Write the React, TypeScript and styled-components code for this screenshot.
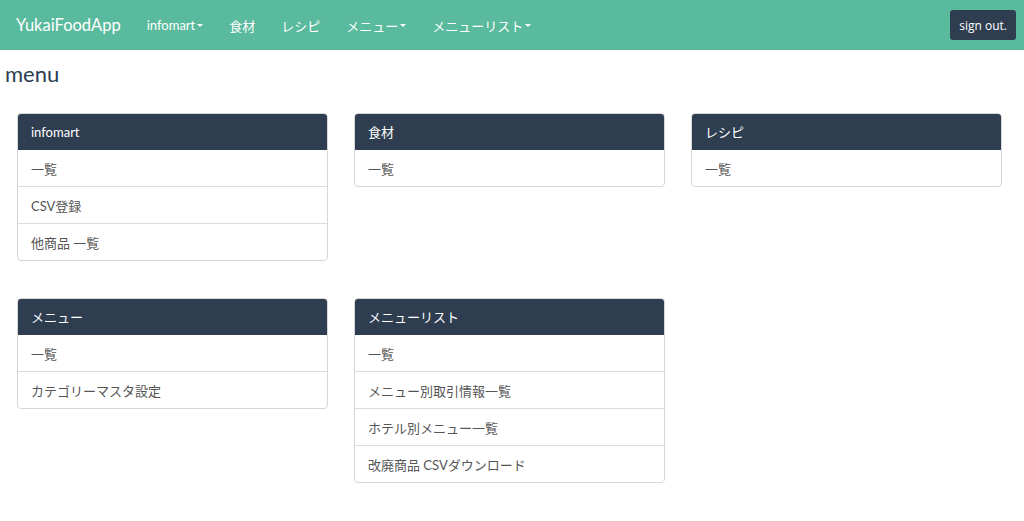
import React from "react";
import styled, { createGlobalStyle } from "styled-components";

const GlobalStyle = createGlobalStyle`
  body {
    margin: 0;
    font-family: Lato, "Noto Sans CJK JP", sans-serif;
    color: #2c3e50;
    background: #fff;
  }
`;

const Navbar = styled.nav`
  height: 50px;
  background: #5aba9e;
  display: flex;
  align-items: center;
  padding: 0 8px 0 16px;
`;

const Brand = styled.a`
  color: #fff;
  font-size: 16.5px;
  margin-right: 13px;
`;

const NavList = styled.ul`
  display: flex;
  list-style: none;
  margin: 0;
  padding: 0;
  flex: 1;
`;

const NavItem = styled.li`
  color: #fff;
  font-size: 13px;
  padding: 0 13px;
  display: flex;
  align-items: center;
`;

const Caret = styled.span`
  display: inline-block;
  width: 0;
  height: 0;
  margin-left: 2px;
  border-top: 3.5px solid #fff;
  border-left: 3.5px solid transparent;
  border-right: 3.5px solid transparent;
`;

const SignOut = styled.button`
  background: #2e3d50;
  color: #fff;
  border: none;
  border-radius: 3px;
  height: 30px;
  padding: 0 9px;
  font-size: 12px;
  font-family: "Open Sans", sans-serif;
`;

const Title = styled.h2`
  font-size: 22px;
  font-weight: 400;
  margin: 12px 0 0 5px;
  line-height: 24px;
`;

const Grid = styled.div`
  display: grid;
  grid-template-columns: repeat(3, 311px);
  column-gap: 26px;
  row-gap: 37px;
  padding: 27px 17px 0;
  align-items: start;
`;

const Panel = styled.div`
  border: 1px solid #d6d6d6;
  border-radius: 4px;
  overflow: hidden;
`;

const PanelHeader = styled.div`
  background: #2e3d50;
  color: #fff;
  font-size: 13px;
  height: 37px;
  display: flex;
  align-items: center;
  padding: 0 14px;
  margin: -1px -1px 0;
`;

const Row = styled.div`
  height: 36px;
  display: flex;
  align-items: center;
  padding: 0 13px;
  font-size: 13px;
  color: #555;
  border-top: 1px solid #dcdcdc;
  &:first-of-type {
    border-top: none;
  }
`;

const sections = [
  { title: "infomart", items: ["一覧", "CSV登録", "他商品 一覧"] },
  { title: "食材", items: ["一覧"] },
  { title: "レシピ", items: ["一覧"] },
  { title: "メニュー", items: ["一覧", "カテゴリーマスタ設定"] },
  {
    title: "メニューリスト",
    items: ["一覧", "メニュー別取引情報一覧", "ホテル別メニュー一覧", "改廃商品 CSVダウンロード"],
  },
];

const navs = [
  { label: "infomart", caret: true },
  { label: "食材" },
  { label: "レシピ" },
  { label: "メニュー", caret: true },
  { label: "メニューリスト", caret: true },
];

export default function App() {
  return (
    <>
      <GlobalStyle />
      <Navbar>
        <Brand>YukaiFoodApp</Brand>
        <NavList>
          {navs.map((n) => (
            <NavItem key={n.label}>
              {n.label}
              {n.caret && <Caret />}
            </NavItem>
          ))}
        </NavList>
        <SignOut>sign out.</SignOut>
      </Navbar>
      <Title>menu</Title>
      <Grid>
        {sections.map((s) => (
          <Panel key={s.title}>
            <PanelHeader>{s.title}</PanelHeader>
            <div>
              {s.items.map((i) => (
                <Row key={i}>{i}</Row>
              ))}
            </div>
          </Panel>
        ))}
      </Grid>
    </>
  );
}
